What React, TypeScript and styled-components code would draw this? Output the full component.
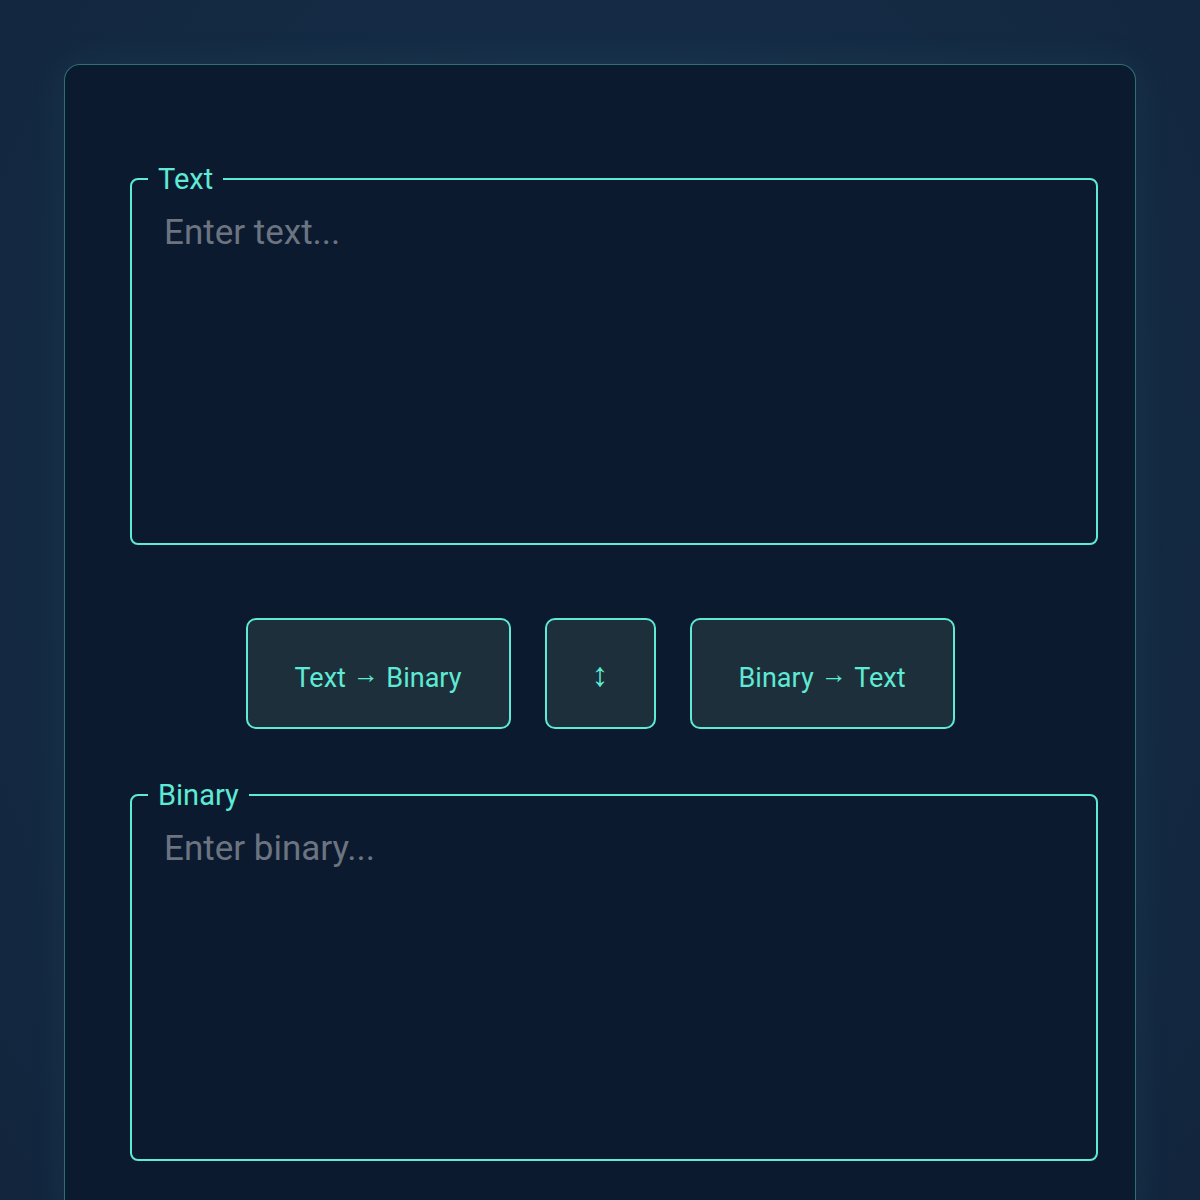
import React from "react";
import styled, { createGlobalStyle } from "styled-components";

const Global = createGlobalStyle`
  html, body { margin: 0; padding: 0; }
  body {
    background: radial-gradient(ellipse at 50% 40%, #1b3550 0%, #152b45 45%, #12253d 100%);
    font-family: Roboto, "Noto Sans", "Liberation Sans", sans-serif;
    min-height: 1200px;
  }
`;

const Page = styled.div`
  padding: 64px 64px 0;
  height: 1200px;
  box-sizing: border-box;
  overflow: hidden;
`;

const Card = styled.main`
  background: #0b1a2f;
  border: 1.5px solid rgba(94, 234, 212, 0.42);
  border-radius: 16px;
  box-shadow: 0 0 40px rgba(94, 234, 212, 0.07);
  padding: 97px 65px 64px;
  display: flex;
  flex-direction: column;
`;

const Field = styled.fieldset`
  margin: 0 -28px 0 0;
  border: 2px solid #5eead4;
  border-radius: 8px;
  padding: 0 16px 16px;
  display: flex;
`;

const Legend = styled.legend`
  color: #5eead4;
  font-size: 29px;
  line-height: 34px;
  padding: 0 10px;
`;

const Area = styled.textarea`
  flex: 1;
  height: 331px;
  box-sizing: border-box;
  background: transparent;
  border: none;
  outline: none;
  resize: none;
  color: #e2e8f0;
  font-family: Roboto, "Noto Sans", "Liberation Sans", sans-serif;
  font-size: 35px;
  line-height: 42px;
  padding: 16px 16px 0;
  &::placeholder { color: #6b7480; }
`;

const Actions = styled.div`
  display: flex;
  justify-content: center;
  gap: 34px;
  margin: 73px 0 49px;
`;

const Button = styled.button<{ $square?: boolean }>`
  width: ${(p) => (p.$square ? "111px" : "265px")};
  height: 111px;
  padding: 4px 0 0;
  background: #1c2f3a;
  border: 2px solid #5eead4;
  border-radius: 10px;
  color: #5eead4;
  font-family: Roboto, "Noto Sans", "Liberation Sans", sans-serif;
  font-size: 27px;
  line-height: 32px;
  cursor: pointer;
`;

const Arrow = styled.span<{ $size?: number }>`
  font-family: "Liberation Sans", sans-serif;
  font-size: ${(p) => p.$size ?? 26}px;
  white-space: pre;
  vertical-align: ${(p) => (p.$size ? "0" : "4px")};
`;

export default function App() {
  return (
    <>
      <Global />
      <Page>
        <Card>
          <Field>
            <Legend>Text</Legend>
            <Area placeholder="Enter text..." />
          </Field>
          <Actions>
            <Button>Text<Arrow> → </Arrow>Binary</Button>
            <Button $square><Arrow $size={34}>↕</Arrow></Button>
            <Button>Binary<Arrow> → </Arrow>Text</Button>
          </Actions>
          <Field>
            <Legend>Binary</Legend>
            <Area placeholder="Enter binary..." />
          </Field>
        </Card>
      </Page>
    </>
  );
}
